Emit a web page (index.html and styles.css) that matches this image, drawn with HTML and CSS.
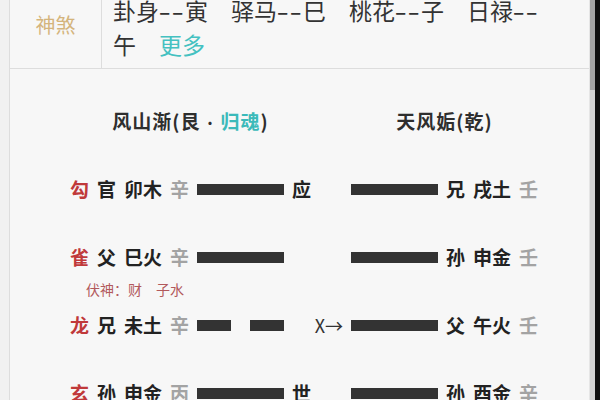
FILE: index.html
```html
<!DOCTYPE html>
<html lang="zh-CN">
<head>
<meta charset="utf-8">
<title>六爻排盘</title>
<link rel="stylesheet" href="styles.css">
</head>
<body>
<div class="screen">
  <div class="gutter"></div>
  <main class="panel">
    <section class="shensha">
      <div class="ss-label">神煞</div>
      <div class="ss-value">卦身<span class="dash">--</span>寅　驿马<span class="dash">--</span>巳　桃花<span class="dash">--</span>子　日禄<span class="dash">--</span><br>午　<span class="more">更多</span></div>
    </section>
    <section class="gua">
      <div class="grid titles">
        <div class="t-left">风山渐(艮<span class="dot">·</span><span class="teal">归魂</span>)</div>
        <div class="t-right">天风姤(乾)</div>
      </div>

      <div class="row">
        <div class="grid line">
          <span class="shen">勾</span><span>官</span><span>卯木</span><span class="na">辛</span>
          <i class="bar"></i>
          <span class="mark">应</span>
          <i class="bar"></i>
          <span>兄</span><span>戌土</span><span class="na">壬</span>
        </div>
      </div>

      <div class="row">
        <div class="grid line">
          <span class="shen">雀</span><span>父</span><span>巳火</span><span class="na">辛</span>
          <i class="bar"></i>
          <span class="mark"></span>
          <i class="bar"></i>
          <span>孙</span><span>申金</span><span class="na">壬</span>
        </div>
        <div class="fushen">伏神：财　子水</div>
      </div>

      <div class="row">
        <div class="grid line">
          <span class="shen">龙</span><span>兄</span><span>未土</span><span class="na">辛</span>
          <i class="bar yin"><b class="seg"></b><b class="seg"></b></i>
          <span class="mark move">X→</span>
          <i class="bar"></i>
          <span>父</span><span>午火</span><span class="na">壬</span>
        </div>
      </div>

      <div class="row">
        <div class="grid line">
          <span class="shen">玄</span><span>孙</span><span>申金</span><span class="na">丙</span>
          <i class="bar"></i>
          <span class="mark">世</span>
          <i class="bar"></i>
          <span>孙</span><span>酉金</span><span class="na">辛</span>
        </div>
      </div>
    </section>
  </main>
  <div class="scrollbar"><div class="thumb"></div></div>
  <div class="edge"></div>
</div>
</body>
</html>
```
FILE: styles.css
```css
* { box-sizing: border-box; }
html, body { margin: 0; padding: 0; }
body {
  width: 600px;
  height: 400px;
  overflow: hidden;
  background: #000;
  font-family: "Noto Sans CJK SC", "Noto Sans", sans-serif;
  color: #2b2b2b;
}
.screen { display: flex; width: 600px; height: 400px; overflow: hidden; }
.gutter { width: 9px; flex: none; background: #f1f1f1; }
.panel {
  width: 581px;
  flex: none;
  background: #f7f7f7;
  border-left: 1px solid #dddddd;
  border-right: 1px solid #e6e6e6;
  overflow: hidden;
}
.scrollbar { width: 5px; flex: none; background: #d4d4d4; display: flex; flex-direction: column; }
.thumb { height: 90px; background: #a6a6a6; }
.edge { width: 5px; flex: none; background: #111; }

/* 神煞 row */
.shensha {
  display: flex;
  margin-top: -6px;
  border-bottom: 1px solid #dddddd;
}
.ss-label {
  width: 92px;
  flex: none;
  border-right: 1px solid #dddddd;
  padding-top: 16px;
  text-align: center;
  font-size: 20px;
  line-height: 30px;
  color: #d4b47c;
}
.ss-value {
  padding: 0 0 7px 11px;
  font-size: 23px;
  line-height: 33.5px;
  color: #333;
  white-space: nowrap;
}
.dash {
  display: inline-block;
  width: 26px;
  letter-spacing: 0.5px;
  transform: scaleX(1.55);
  transform-origin: 1px 50%;
}
.more { color: #44c1c1; }

/* 卦 */
.gua { padding: 40px 0 0 60px; }
.grid {
  display: grid;
  grid-template-columns: 19px 19px 38px 19px 87px 51px 87px 19px 38px 19px;
  column-gap: 8px;
}
.titles {
  height: 24px;
  line-height: 24px;
  font-size: 19px;
  font-weight: 700;
  letter-spacing: 1px;
  color: #2e2e2e;
  margin-bottom: 22px;
}
.t-left { grid-column: 2 / 6; text-align: center; white-space: nowrap; }
.t-right { grid-column: 7 / 11; text-align: center; white-space: nowrap; }
.dot { font-weight: 400; font-size: 15px; padding: 0 2px; }
.teal { color: #3bbaba; }

.row { height: 68px; padding-top: 22px; }
.line {
  height: 24px;
  line-height: 24px;
  align-items: center;
  font-size: 19px;
  font-weight: 700;
  color: #222;
  white-space: nowrap;
}
.shen { color: #c0393a; }
.na { color: #a3a3a3; font-weight: 700; }
.bar { display: block; height: 11px; background: #333; }
.bar.yin { background: none; display: flex; justify-content: space-between; }
.seg { display: block; width: 34px; height: 11px; background: #333; }
.mark { text-align: left; }
.mark.move { text-align: right; font-weight: 400; font-size: 18px; color: #333; }

.fushen {
  margin-top: 13px;
  padding-left: 16px;
  font-size: 14px;
  line-height: 14px;
  color: #b2595c;
  white-space: nowrap;
}
```
